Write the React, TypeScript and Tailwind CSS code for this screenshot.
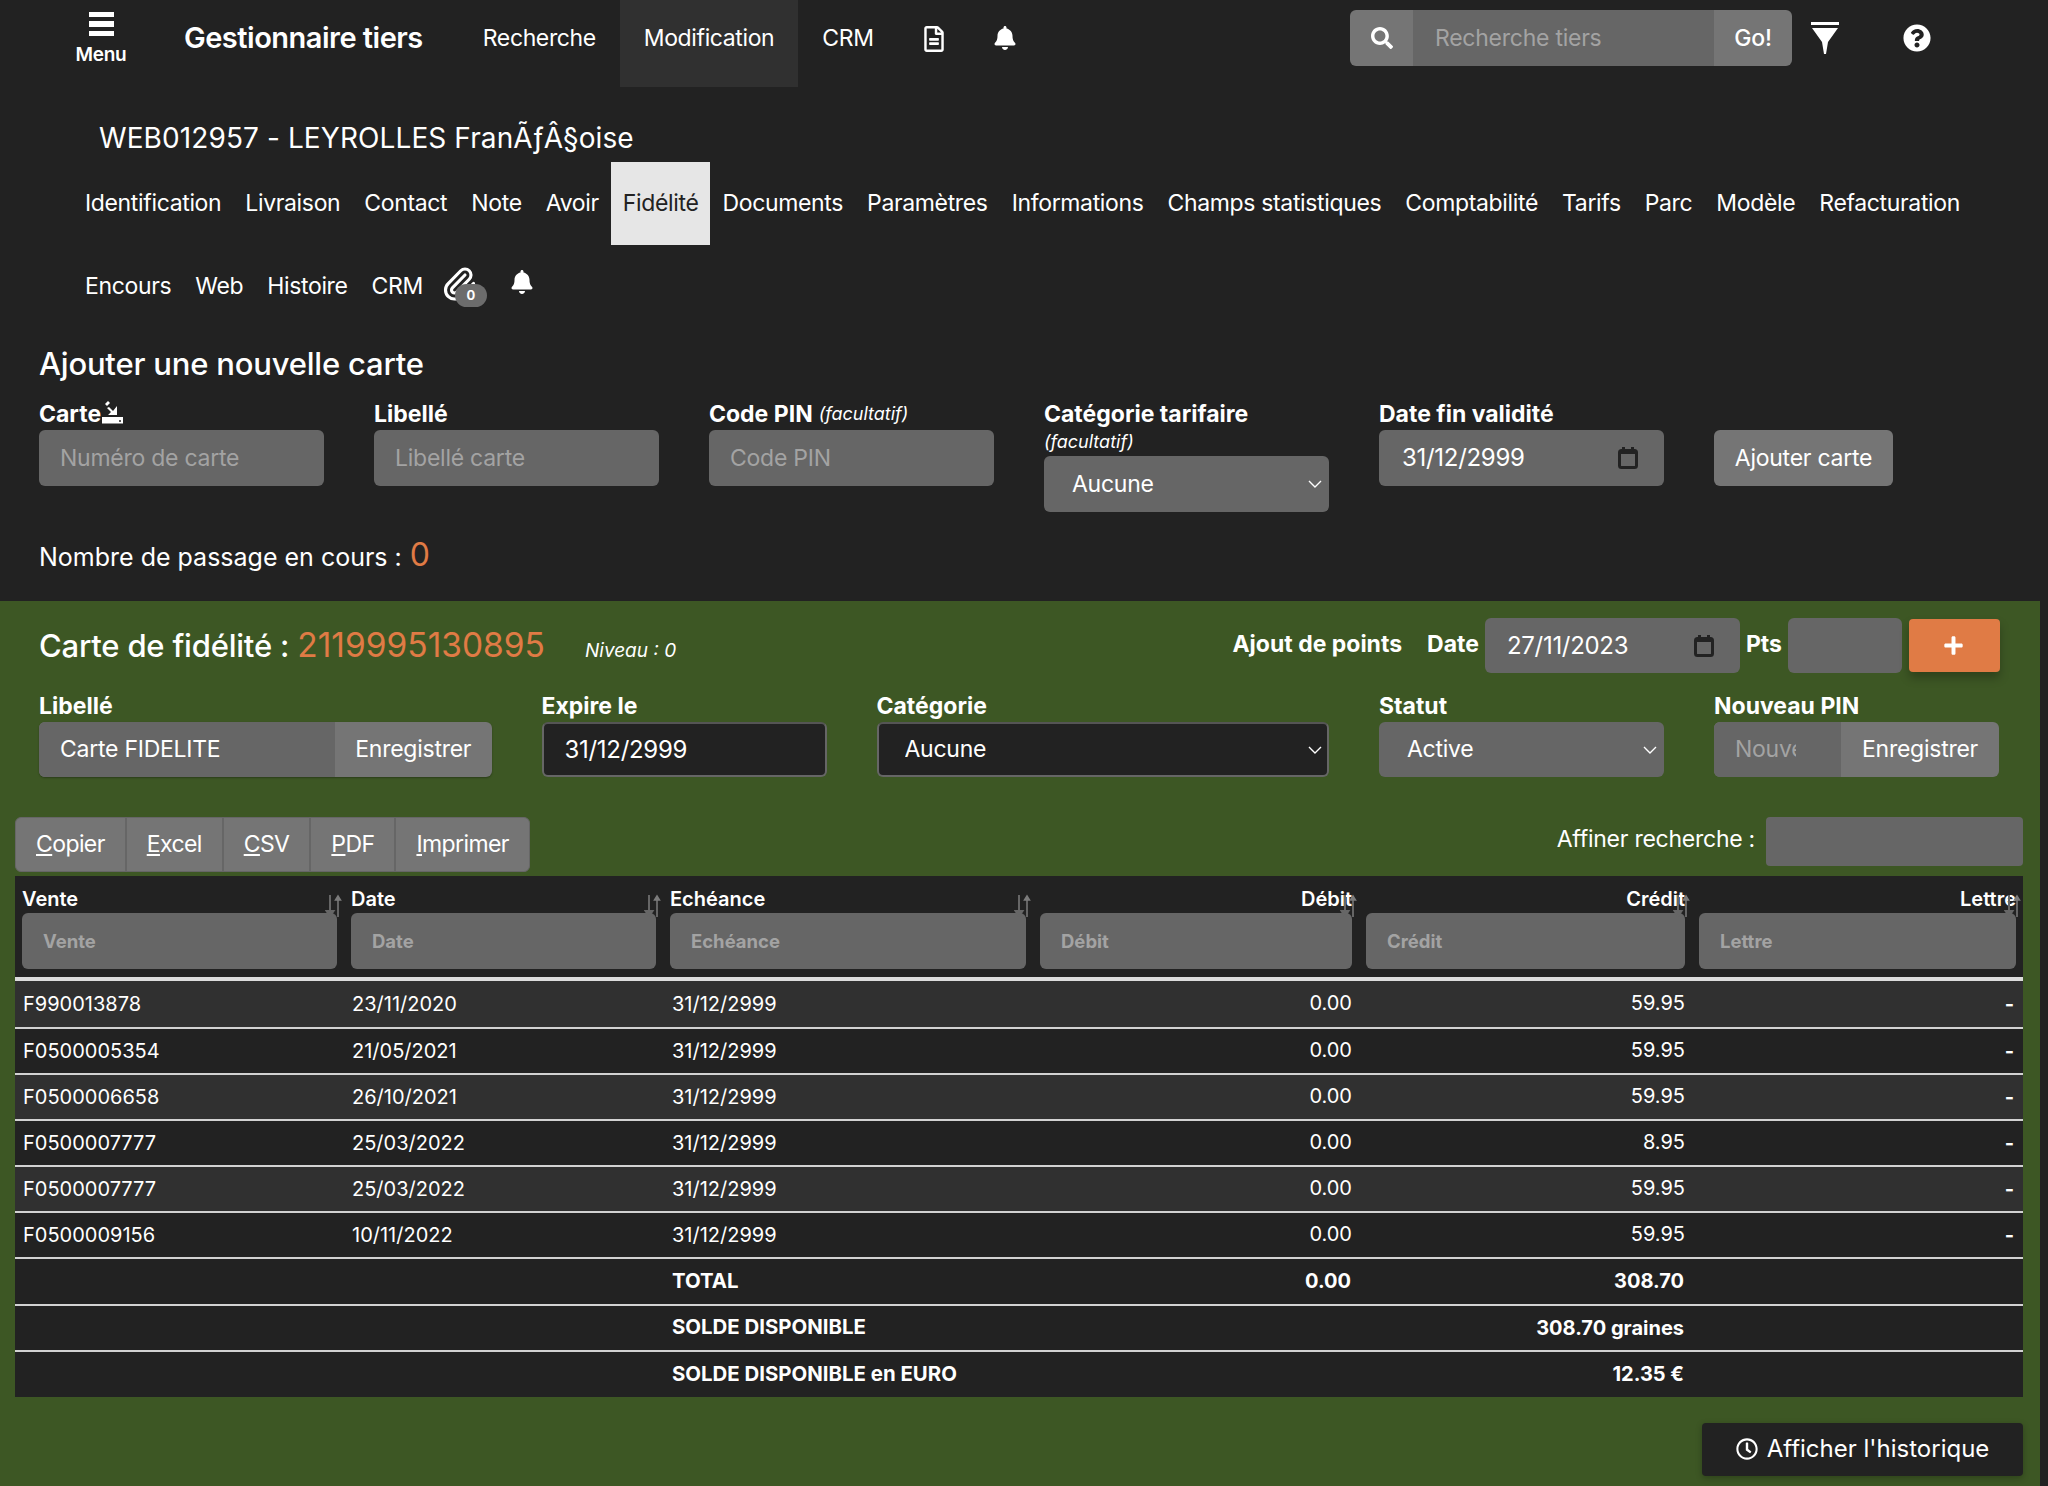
import { FaBell, FaRegFileAlt, FaSearch, FaQuestionCircle, FaPlus, FaRegClock } from "react-icons/fa";
import { Paperclip } from "lucide-react";

const topNav = ["Recherche", "Modification", "CRM"];
const tabsRow1 = ["Identification", "Livraison", "Contact", "Note", "Avoir", "Fidélité", "Documents", "Paramètres", "Informations", "Champs statistiques", "Comptabilité", "Tarifs", "Parc", "Modèle", "Refacturation"];
const tabsRow2 = ["Encours", "Web", "Histoire", "CRM"];

const rows = [
  ["F990013878", "23/11/2020", "31/12/2999", "0.00", "59.95"],
  ["F0500005354", "21/05/2021", "31/12/2999", "0.00", "59.95"],
  ["F0500006658", "26/10/2021", "31/12/2999", "0.00", "59.95"],
  ["F0500007777", "25/03/2022", "31/12/2999", "0.00", "8.95"],
  ["F0500007777", "25/03/2022", "31/12/2999", "0.00", "59.95"],
  ["F0500009156", "10/11/2022", "31/12/2999", "0.00", "59.95"],
];

const totals = [
  ["TOTAL", "0.00", "308.70"],
  ["SOLDE DISPONIBLE", "", "308.70 graines"],
  ["SOLDE DISPONIBLE en EURO", "", "12.35 €"],
];

const columns = [
  { name: "Vente", right: false, width: "w-[329px]" },
  { name: "Date", right: false, width: "w-[319px]" },
  { name: "Echéance", right: false, width: "w-[370px]" },
  { name: "Débit", right: true, width: "w-[326px]" },
  { name: "Crédit", right: true, width: "w-[333px]" },
  { name: "Lettre", right: true, width: "w-[331px]" },
];

const inputClass = "h-[56px] w-full rounded-[6px] bg-[#666666] px-[21px] outline-none placeholder:text-[#a3a3a3]";
const dateText = "text-[24px] tracking-[-0.3px]";

function CalendarIcon() {
  return (
    <svg width="20" height="22" viewBox="0 0 20 22" className="shrink-0">
      <rect x="1.5" y="3.5" width="17" height="17" rx="2" fill="none" stroke="#222222" strokeWidth="3" />
      <rect x="1.5" y="3" width="17" height="4" fill="#222222" />
      <rect x="4" y="0" width="3" height="4" fill="#222222" />
      <rect x="13" y="0" width="3" height="4" fill="#222222" />
    </svg>
  );
}

function Chevron() {
  return (
    <svg width="14" height="8" viewBox="0 0 14 8" className="pointer-events-none absolute right-[7px] top-1/2 -translate-y-1/2">
      <polyline points="1,1 7,7 13,1" fill="none" stroke="#ffffff" strokeWidth="1.4" />
    </svg>
  );
}

function SortIcon() {
  return (
    <svg width="18" height="24" viewBox="0 0 18 24" className="absolute right-[1px] top-[18px]">
      <path d="M5 1v19M1.5 17l3.5 5 3.5-5z" fill="#666666" stroke="#666666" strokeWidth="2" />
      <path d="M13 23V4M10.5 6L13 2l2.5 4z" fill="#7c7c7c" stroke="#7c7c7c" strokeWidth="1.5" />
    </svg>
  );
}

function SwipeIcon() {
  return (
    <svg width="22" height="23" viewBox="0 0 22 23" className="-ml-[5px] -mt-[4px]">
      <path d="M0 16h21v6.5H0z" fill="#ffffff" />
      <circle cx="18" cy="20" r="1" fill="#222222" />
      <path d="M7 6l4 4 4-5v9H6l3-3-4-4z" fill="#ffffff" />
      <path d="M6 0L3 3l2 2 3-3z" fill="#ffffff" />
    </svg>
  );
}

function FunnelIcon() {
  return (
    <svg width="28" height="32" viewBox="0 0 28 32">
      <rect x="0" y="0" width="28" height="3" fill="#ffffff" />
      <path d="M1 6h26L17 20l-2 12h-2l-2-12z" fill="#ffffff" />
    </svg>
  );
}

function Field({ label, children, note }: { label: string; children: React.ReactNode; note?: React.ReactNode }) {
  return (
    <div className="px-[25px]">
      <div className="flex items-center gap-[6px] text-[23px] font-bold leading-[28px] tracking-normal">
        {label}
        {note}
      </div>
      <div className="mt-[2px]">{children}</div>
    </div>
  );
}

function UnderlineFirst({ text }: { text: string }) {
  return (
    <span>
      <span className="underline">{text[0]}</span>
      {text.slice(1)}
    </span>
  );
}

export default function App() {
  return (
    <div className="min-h-[1486px] bg-[#222222] font-['Inter',sans-serif] text-[23px] tracking-[-0.25px] text-white">
      <div className="w-[2040px]">
        {/* barre du haut */}
        <header className="flex h-[87px] items-start pl-[74px] pr-[109px]">
          <div className="flex w-[54px] flex-col items-center pt-[12px]">
            <div className="flex w-[25px] flex-col gap-[4px]">
              <span className="h-[5px] bg-white" />
              <span className="h-[6px] bg-white" />
              <span className="h-[5px] bg-white" />
            </div>
            <span className="mt-[9px] text-[19px] font-semibold leading-[20px]">Menu</span>
          </div>
          <div className="ml-[56px] pt-[18px] text-[29px] font-semibold leading-[40px] tracking-[-0.5px]">Gestionnaire tiers</div>
          <nav className="ml-[36px] flex tracking-[-0.38px]">
            {topNav.map((item) => (
              <a key={item} className={`h-[87px] px-6 pt-[22px] leading-[32px] ${item === "Modification" ? "bg-[#303030]" : ""}`}>
                {item}
              </a>
            ))}
            <span className="ml-[23px] pt-[26px]">
              <FaRegFileAlt size={26} />
            </span>
            <span className="ml-[46px] pt-[26px]">
              <FaBell size={24} />
            </span>
          </nav>
          <div className="ml-auto flex items-start pt-[10px]">
            <div className="flex h-[56px] w-[442px] overflow-hidden rounded-[6px] bg-[#757575]">
              <span className="flex w-[63px] items-center justify-center">
                <FaSearch size={22} />
              </span>
              <input placeholder="Recherche tiers" className="w-[301px] bg-[#666666] px-[22px] outline-none placeholder:text-[#a3a3a3]" />
              <span className="flex flex-1 items-center justify-center font-medium">Go!</span>
            </div>
            <span className="ml-[19px] pt-[12px]">
              <FunnelIcon />
            </span>
            <span className="ml-[64px] pt-[14px]">
              <FaQuestionCircle size={28} />
            </span>
          </div>
        </header>

        <h1 className="pl-[99px] pt-[34px] text-[28px] font-normal leading-[34px] tracking-[0.1px]">WEB012957 - LEYROLLES FranÃƒÂ§oise</h1>

        {/* onglets */}
        <div className="mt-[7px] pl-[73px] tracking-[-0.35px]">
          <div className="flex">
            {tabsRow1.map((tab) => (
              <a key={tab} className={`flex h-[83px] items-center whitespace-nowrap px-3 ${tab === "Fidélité" ? "bg-[#e6e6e6] text-[#222222]" : ""}`}>
                {tab}
              </a>
            ))}
          </div>
          <div className="flex">
            {tabsRow2.map((tab) => (
              <a key={tab} className="flex h-[83px] items-center px-3">
                {tab}
              </a>
            ))}
            <span className="relative ml-[6px] mt-[21px] h-[36px] w-[46px]">
              <Paperclip size={36} strokeWidth={2.1} />
              <span className="absolute left-[14px] top-[18px] flex h-[23px] w-[32px] items-center justify-center rounded-full bg-[#6c6c6c] text-[13px] font-bold tracking-normal">0</span>
            </span>
            <span className="ml-[23px] mt-[25px]">
              <FaBell size={24} />
            </span>
          </div>
        </div>

        {/* ajout de carte */}
        <h2 className="pl-[39px] pt-[16px] text-[31px] font-medium leading-[40px] tracking-[-0.2px]">Ajouter une nouvelle carte</h2>
        <div className="grid grid-cols-[repeat(6,335px)] items-start pl-[14px] pt-[16px]">
          <Field label="Carte" note={<SwipeIcon />}>
            <input placeholder="Numéro de carte" className={inputClass} />
          </Field>
          <Field label="Libellé">
            <input placeholder="Libellé carte" className={inputClass} />
          </Field>
          <Field label="Code PIN" note={<i className="text-[18px] font-normal">(facultatif)</i>}>
            <input placeholder="Code PIN" className={inputClass} />
          </Field>
          <div className="px-[25px]">
            <div className="whitespace-nowrap text-[23px] font-bold leading-[28px] tracking-normal">Catégorie tarifaire</div>
            <div className="text-[18px] italic leading-[28px] tracking-normal">(facultatif)</div>
            <div className="relative">
              <select defaultValue="Aucune" className="h-[56px] w-full appearance-none rounded-[6px] bg-[#666666] px-[28px] outline-none">
                <option>Aucune</option>
              </select>
              <Chevron />
            </div>
          </div>
          <Field label="Date fin validité">
            <div className="flex h-[56px] items-center justify-between rounded-[6px] bg-[#666666] pl-[23px] pr-[26px]">
              <span className={dateText}>31/12/2999</span>
              <CalendarIcon />
            </div>
          </Field>
          <div className="px-[25px] pt-[30px]">
            <button className="h-[56px] w-[179px] rounded-[6px] bg-[#757575]">Ajouter carte</button>
          </div>
        </div>
        <div className="flex items-baseline gap-[8px] pb-[24px] pl-[39px] pt-[23px] text-[25px] leading-[40px] tracking-normal">
          Nombre de passage en cours :<span className="text-[32px] text-[#e07b45]">0</span>
        </div>

        {/* carte de fidélité */}
        <section className="min-h-[886px] bg-[#3d5724] pb-[11px] pt-[17px]">
          <div className="flex h-[55px] items-center pl-[39px] pr-[40px]">
            <div className="flex items-baseline">
              <span className="text-[31px] font-medium leading-[40px] tracking-[-0.2px]">
                Carte de fidélité : <span className="text-[33.5px] font-normal tracking-normal text-[#e07b45]">2119995130895</span>
              </span>
              <i className="ml-[40px] text-[19px] tracking-normal">Niveau : 0</i>
            </div>
            <div className="ml-auto flex items-center tracking-normal">
              <span className="pb-[2px] font-bold">Ajout de points</span>
              <span className="ml-[25px] pb-[2px] font-bold">Date</span>
              <div className="ml-[6px] flex h-[55px] w-[255px] items-center justify-between rounded-[6px] bg-[#666666] pl-[22px] pr-[26px]">
                <span className={dateText}>27/11/2023</span>
                <CalendarIcon />
              </div>
              <span className="ml-[6px] pb-[2px] font-bold">Pts</span>
              <div className="ml-[6px] h-[55px] w-[114px] rounded-[6px] bg-[#666666]" />
              <button className="ml-[7px] flex h-[53px] w-[91px] items-center justify-center rounded-[4px] bg-[#e07b45] pr-[3px] shadow-[0_6px_10px_rgba(0,0,0,0.25)]">
                <FaPlus size={21} />
              </button>
            </div>
          </div>

          <div className="grid grid-cols-[repeat(12,167.5px)] pl-[14px] pt-[19px]">
            <div className="col-span-3">
              <Field label="Libellé">
                <div className="flex h-[55px] overflow-hidden rounded-[6px] bg-[#757575] shadow-[0_1px_2px_rgba(0,0,0,0.3)]">
                  <input defaultValue="Carte FIDELITE" className="w-[296px] bg-[#666666] px-[21px] outline-none" />
                  <span className="flex flex-1 items-center justify-center">Enregistrer</span>
                </div>
              </Field>
            </div>
            <div className="col-span-2">
              <Field label="Expire le">
                <div className={`flex h-[55px] items-center rounded-[6px] border-2 border-[#666666] border-t-[#555555] bg-[#222222] pl-[21px] ${dateText}`}>31/12/2999</div>
              </Field>
            </div>
            <div className="col-span-3">
              <Field label="Catégorie">
                <div className="relative">
                  <select defaultValue="Aucune" className="h-[55px] w-full appearance-none rounded-[6px] border-2 border-[#666666] border-t-[#555555] bg-[#222222] px-[26px] outline-none">
                    <option>Aucune</option>
                  </select>
                  <Chevron />
                </div>
              </Field>
            </div>
            <div className="col-span-2">
              <Field label="Statut">
                <div className="relative">
                  <select defaultValue="Active" className="h-[55px] w-full appearance-none rounded-[6px] bg-[#666666] px-[28px] outline-none">
                    <option>Active</option>
                  </select>
                  <Chevron />
                </div>
              </Field>
            </div>
            <div className="col-span-2">
              <Field label="Nouveau PIN">
                <div className="flex h-[55px] overflow-hidden rounded-[6px] bg-[#757575]">
                  <input placeholder="Nouveau PIN" className="w-[127px] bg-[#666666] pl-[21px] pr-[45px] outline-none placeholder:text-[#a3a3a3]" />
                  <span className="flex flex-1 items-center justify-center">Enregistrer</span>
                </div>
              </Field>
            </div>
          </div>

          {/* boutons et recherche */}
          <div className="flex items-start justify-between pl-[15px] pr-[17px] pt-[40px]">
            <div className="flex h-[55px] divide-x-2 divide-[#666666] overflow-hidden rounded-[6px] border border-[#666666] bg-[#757575] tracking-[-0.6px]">
              {["Copier", "Excel", "CSV", "PDF", "Imprimer"].map((b) => (
                <button key={b} className="px-[20px]">
                  <UnderlineFirst text={b} />
                </button>
              ))}
            </div>
            <div className="flex items-center gap-[11px]">
              <span className="pb-[4px]">Affiner recherche :</span>
              <div className="h-[49px] w-[257px] rounded-[4px] bg-[#666666]" />
            </div>
          </div>

          {/* table des ventes */}
          <div className="ml-[15px] mt-[4px] w-[2008px] tracking-normal">
            <table className="w-full table-fixed border-separate border-spacing-0 bg-[#222222]">
              <thead>
                <tr>
                  {columns.map((col) => (
                    <th key={col.name} className={`relative h-[105px] border-b-4 border-[#dcdcdc] px-[7px] pt-[10px] align-top font-normal ${col.width}`}>
                      <div className={`text-[20px] font-semibold leading-[26px] ${col.right ? "text-right" : "text-left"}`}>{col.name}</div>
                      <input placeholder={col.name} className="mt-[1px] h-[56px] w-full rounded-[6px] bg-[#666666] px-[21px] text-[18.5px] font-bold outline-none placeholder:text-[#a3a3a3]" />
                      <SortIcon />
                    </th>
                  ))}
                </tr>
              </thead>
              <tbody className="text-[20px]">
                {rows.map((row, i) => (
                  <tr key={i} className={i % 2 === 0 ? "bg-[#303030]" : "bg-[#222222]"}>
                    <td className={`h-[46px] pl-[8px] ${i > 0 ? "border-t-2 border-[#d2d2d2]" : ""}`}>{row[0]}</td>
                    <td className={`pl-[8px] ${i > 0 ? "border-t-2 border-[#d2d2d2]" : ""}`}>{row[1]}</td>
                    <td className={`pl-[9px] ${i > 0 ? "border-t-2 border-[#d2d2d2]" : ""}`}>{row[2]}</td>
                    <td className={`pb-[3px] pr-[7px] text-right ${i > 0 ? "border-t-2 border-[#d2d2d2]" : ""}`}>{row[3]}</td>
                    <td className={`pb-[3px] pr-[7px] text-right ${i > 0 ? "border-t-2 border-[#d2d2d2]" : ""}`}>{row[4]}</td>
                    <td className={`pr-[9px] text-right font-bold ${i > 0 ? "border-t-2 border-[#d2d2d2]" : ""}`}>-</td>
                  </tr>
                ))}
                {totals.map((row) => (
                  <tr key={row[0]} className="font-bold">
                    <td className="h-[46.5px] border-t-2 border-[#d2d2d2]" />
                    <td className="border-t-2 border-[#d2d2d2]" />
                    <td className="border-t-2 border-[#d2d2d2] pl-[9px] text-[20.4px]">{row[0]}</td>
                    <td className="border-t-2 border-[#d2d2d2] pr-[8px] text-right">{row[1]}</td>
                    <td className="border-t-2 border-[#d2d2d2] pr-[8px] text-right">{row[2]}</td>
                    <td className="border-t-2 border-[#d2d2d2]" />
                  </tr>
                ))}
              </tbody>
            </table>
          </div>

          <div className="mt-[26px] flex justify-end pr-[17px]">
            <button className="flex h-[53px] w-[321px] items-center justify-center gap-[9px] rounded-[4px] bg-[#222222] text-[24px] tracking-normal shadow-[0_2px_6px_rgba(0,0,0,0.25)]">
              <FaRegClock size={22} />
              Afficher l'historique
            </button>
          </div>
        </section>
      </div>
    </div>
  );
}
